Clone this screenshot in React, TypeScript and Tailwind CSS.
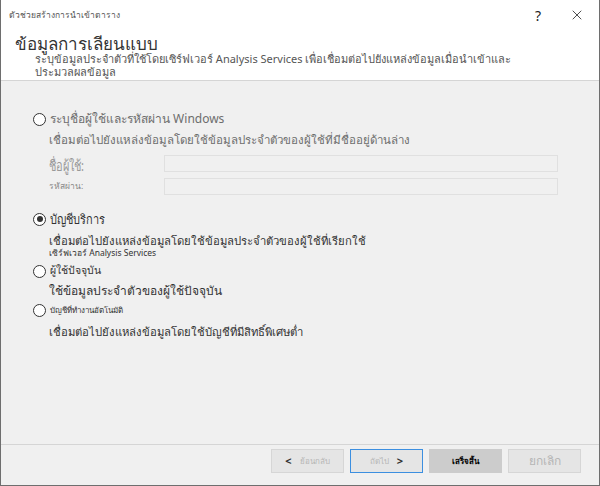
import { X } from "lucide-react";

const font = "font-['Tahoma','Noto_Sans','DejaVu_Sans',sans-serif]";

function Radio({ checked }: { checked?: boolean }) {
  return (
    <span className="flex h-[13px] w-[13px] shrink-0 items-center justify-center rounded-full border-[1.5px] border-[#333] bg-white">
      {checked && <span className="h-[6px] w-[6px] rounded-full bg-[#333]" />}
    </span>
  );
}

function Button({
  children,
  variant = "disabled",
}: {
  children: React.ReactNode;
  variant?: "disabled" | "focus" | "active";
}) {
  const styles = {
    disabled: "border-[#d6d6d6] bg-[#e5e5e5] text-[#b5b5b5]",
    focus: "border-[#3c8fe0] bg-[#e5e5e5] text-[#b5b5b5]",
    active: "border-[#cccccc] bg-[#cccccc] text-black font-bold",
  };
  return (
    <div
      className={`flex h-[24px] w-[73px] items-center justify-center gap-2 border text-[8px] ${styles[variant]}`}
    >
      {children}
    </div>
  );
}

export default function App() {
  return (
    <div
      className={`flex h-[486px] w-[600px] flex-col border border-t-0 border-[#6e6e6e] bg-[#f0f0f0] ${font}`}
    >
      <div className="flex h-[30px] items-center justify-between bg-white pl-[8px] pr-[14px]">
        <span className="text-[8.5px] text-[#555]">ตัวช่วยสร้างการนำเข้าตาราง</span>
        <div className="flex items-center gap-[28px] text-[#222]">
          <span className="text-[14px]">?</span>
          <X size={16} strokeWidth={1.2} />
        </div>
      </div>

      {/* header */}
      <div className="flex h-[51px] flex-col border-b border-[#d5d5d5] bg-white pl-[14px] pt-[5px]">
        <div className="text-[17px] leading-[17px] text-[#333]">ข้อมูลการเลียนแบบ</div>
        <div className="pl-[20px] text-[11px] leading-[13px] text-[#555]">
          ระบุข้อมูลประจำตัวที่ใช้โดยเซิร์ฟเวอร์ Analysis Services เพื่อเชื่อมต่อไปยังแหล่งข้อมูลเมื่อนำเข้าและ
          <br />
          ประมวลผลข้อมูล
        </div>
      </div>

      <div className="flex flex-1 flex-col pl-[32px] pr-[41px] pt-[30px]">
        <div className="flex h-[16px] items-center gap-[4px]">
          <Radio />
          <span className="text-[12px] text-[#6d6d6d]">ระบุชื่อผู้ใช้และรหัสผ่าน Windows</span>
        </div>
        <div className="mt-[5px] pl-[16px] text-[11.5px] leading-[16px] text-[#6d6d6d]">
          เชื่อมต่อไปยังแหล่งข้อมูลโดยใช้ข้อมูลประจำตัวของผู้ใช้ที่มีชื่ออยู่ด้านล่าง
        </div>
        <div className="mt-[7px] flex h-[17px] items-center pl-[16px]">
          <span className="w-[115px]">
            <span className="inline-block origin-left scale-y-[1.35] text-[11px] text-[#999]">ชื่อผู้ใช้:</span>
          </span>
          <div className="h-[17px] flex-1 border border-[#e0e0e0] bg-[#f0f0f0]" />
        </div>
        <div className="mt-[6px] flex h-[17px] items-center pl-[16px]">
          <span className="w-[115px] text-[8.5px] text-[#888]">รหัสผ่าน:</span>
          <div className="h-[17px] flex-1 border border-[#e0e0e0] bg-[#f0f0f0]" />
        </div>

        <div className="mt-[16px] flex h-[16px] items-center gap-[4px]">
          <Radio checked />
          <span className="inline-block scale-y-[1.2] text-[11px] text-[#333]">บัญชีบริการ</span>
        </div>
        <div className="mt-[7px] pl-[16px] text-[11.3px] leading-[14px] text-[#333]">
          เชื่อมต่อไปยังแหล่งข้อมูลโดยใช้ข้อมูลประจำตัวของผู้ใช้ที่เรียกใช้
        </div>
        <div className="pl-[16px] text-[8.5px] leading-[9px] text-[#333]">เซิร์ฟเวอร์ Analysis Services</div>

        <div className="mt-[6px] flex h-[16px] items-center gap-[4px]">
          <Radio />
          <span className="text-[10.5px] text-[#333]">ผู้ใช้ปัจจุบัน</span>
        </div>
        <div className="mt-[4px] pl-[16px] text-[12px] leading-[16px] text-[#333]">
          ใช้ข้อมูลประจำตัวของผู้ใช้ปัจจุบัน
        </div>
        <div className="mt-[3px] flex h-[16px] items-center gap-[4px]">
          <Radio />
          <span className="text-[8px] text-[#333]">บัญชีที่ทำงานอัตโนมัติ</span>
        </div>
        <div className="mt-[6px] pl-[16px] text-[11.3px] leading-[16px] text-[#333]">
          เชื่อมต่อไปยังแหล่งข้อมูลโดยใช้บัญชีที่มีสิทธิ์พิเศษต่ำ
        </div>
      </div>

      <div className="flex h-[41px] items-start justify-end gap-[6px] border-t border-[#d5d5d5] pr-[18px] pt-[4px]">
        <Button>
          <span className="text-[11px] font-bold text-[#333]">&lt;</span>
          <span>ย้อนกลับ</span>
        </Button>
        <Button variant="focus">
          <span>ถัดไป</span>
          <span className="text-[11px] font-bold text-[#333]">&gt;</span>
        </Button>
        <Button variant="active">เสร็จสิ้น</Button>
        <Button>
          <span className="text-[12px]">ยกเลิก</span>
        </Button>
      </div>
    </div>
  );
}
